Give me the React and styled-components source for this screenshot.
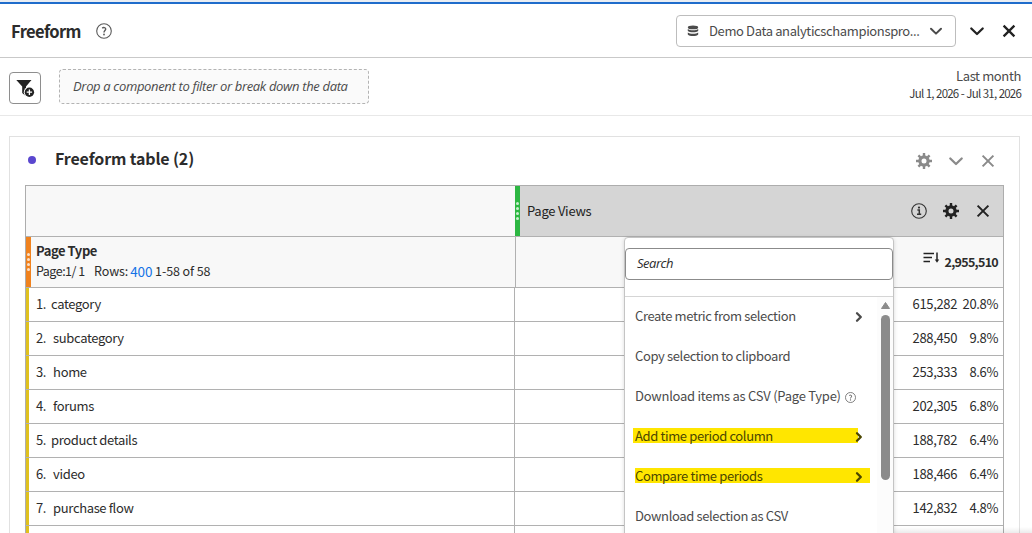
import React from "react";
import styled, { createGlobalStyle } from "styled-components";

const GlobalStyle = createGlobalStyle`
  * {
    box-sizing: border-box;
  }

  body {
    margin: 0;
    overflow: hidden;
    background: #fff;
    color: #2c2c2c;
    font-family: "Noto Sans CJK SC", "Open Sans", sans-serif;
    font-size: 13px;
    line-height: 20px;
    letter-spacing: -0.36px;
  }
`;

const rows = [
  { name: "category", views: "615,282", percent: "20.8%", tight: true },
  { name: "subcategory", views: "288,450", percent: "9.8%" },
  { name: "home", views: "253,333", percent: "8.6%" },
  { name: "forums", views: "202,305", percent: "6.8%" },
  { name: "product details", views: "188,782", percent: "6.4%", tight: true },
  { name: "video", views: "188,466", percent: "6.4%" },
  { name: "purchase flow", views: "142,832", percent: "4.8%" },
  { name: "", views: "", percent: "" },
];

const menuItems = [
  { label: "Create metric from selection", arrow: true },
  { label: "Copy selection to clipboard" },
  { label: "Download items as CSV (Page Type)", help: true },
  { label: "Add time period column", arrow: true, mark: [8, 225] },
  { label: "Compare time periods", arrow: true, mark: [10, 235] },
  { label: "Download selection as CSV" },
];

const Page = styled.div`
  position: relative;
  height: 533px;
  overflow: hidden;
  display: flex;
  flex-direction: column;
`;

const TopStrip = styled.div`
  flex: none;
  height: 4px;
  background: #e9edf3;
  border-bottom: 2px solid #1f6ccb;
`;

const Header = styled.header`
  flex: none;
  height: 54px;
  display: flex;
  align-items: center;
  padding: 0 15px 0 11px;
  border-bottom: 1px solid #c9c9c9;
`;

const Title = styled.h1`
  margin: 0 15px 0 0;
  width: 70px;
  white-space: nowrap;
  font-size: 16.5px;
  font-weight: 700;
  letter-spacing: -0.6px;
`;

const Picker = styled.button`
  margin-left: auto;
  width: 280px;
  height: 32px;
  display: flex;
  align-items: center;
  padding: 0 12px 0 10px;
  border: 1px solid #bdbdbd;
  border-radius: 4px;
  background: #fff;
  color: #4b4b4b;
  font: inherit;
`;

const PickerLabel = styled.span`
  flex: 1;
  margin-left: 10px;
  text-align: left;
  white-space: nowrap;
  letter-spacing: -0.37px;
`;

const HeaderActions = styled.div`
  display: flex;
  gap: 16px;
  margin-left: 13px;
  color: #222;
`;

const FilterBar = styled.div`
  flex: none;
  height: 58px;
  display: flex;
  align-items: flex-start;
  padding: 9px 11px 0 9px;
  border-bottom: 1px solid #e8e8e8;
`;

const FilterButton = styled.button`
  width: 32px;
  height: 32px;
  margin-top: 5px;
  padding: 0;
  border: 1px solid #8e8e8e;
  border-radius: 4px;
  background: #fff;
  display: flex;
  align-items: center;
  justify-content: center;
`;

const DropZone = styled.div`
  width: 310px;
  height: 35px;
  margin: 2px 0 0 18px;
  padding: 0 13px;
  border: 1px dashed #b3b3b3;
  border-radius: 4px;
  background: #fafafa;
  color: #4b4b4b;
  font: italic 13px/33px "Open Sans", sans-serif;
  letter-spacing: -0.34px;
  white-space: nowrap;
`;

const DateRange = styled.div`
  margin-left: auto;
  text-align: right;
  color: #4b4b4b;
  line-height: 18px;
`;

const Dates = styled.div`
  font-size: 11.5px;
  line-height: 17px;
  letter-spacing: -0.8px;
  word-spacing: 0.6px;
  color: #3a3a3a;
`;

const Panel = styled.section`
  flex: none;
  width: 1011px;
  height: 420px;
  margin: 20px 0 0 9px;
  padding: 0 15px;
  border: 1px solid #e1e1e1;
`;

const PanelHead = styled.div`
  height: 48px;
  display: flex;
  align-items: center;
`;

const Dot = styled.span`
  width: 8px;
  height: 8px;
  margin: -2px 19px 0 3px;
  border-radius: 50%;
  background: #5a47cf;
`;

const PanelTitle = styled.h2`
  margin: -7px 0 0;
  font-size: 16px;
  font-weight: 700;
  white-space: nowrap;
  letter-spacing: -0.15px;
`;

const Actions = styled.div`
  display: flex;
  align-items: center;
  gap: 16px;
  margin-left: auto;
  color: ${(props) => props.$color};
  padding-right: ${(props) => props.$end}px;
`;

const Table = styled.div`
  width: 979px;
  border: 1px solid #adadad;
`;

const Row = styled.div`
  display: flex;
  height: ${(props) => props.$height}px;
  border-bottom: 1px solid #b1b1b1;
  background: ${(props) => props.$bg || "#fff"};
`;

const HeadSpacer = styled.div`
  width: 489px;
`;

const MetricHead = styled.div`
  flex: 1;
  display: flex;
  align-items: center;
  background: #d5d5d5;
  color: #222;
`;

const Grip = styled.div`
  width: 5px;
  height: 50px;
  flex: none;
  display: flex;
  flex-direction: column;
  align-items: center;
  justify-content: center;
  gap: 2px;
  background: ${(props) => props.$color};
`;

const GripDot = styled.i`
  width: 3px;
  height: 3px;
  border-radius: 50%;
  background: rgba(255, 255, 255, 0.75);
`;

const MetricName = styled.span`
  margin-left: 7px;
  letter-spacing: -0.26px;
`;

const DimensionCell = styled.div`
  width: 490px;
  display: flex;
  border-right: 1px solid #b1b1b1;
`;

const DimensionText = styled.div`
  padding: 4px 0 0 5px;
  color: #2c2c2c;
`;

const DimensionName = styled.div`
  font-weight: 700;
  letter-spacing: -0.45px;
`;

const Paging = styled.div`
  display: flex;
  white-space: pre;
  font-size: 12.5px;
  letter-spacing: -0.1px;
`;

const PageCount = styled.span`
  width: 58px;
  letter-spacing: -0.5px;
`;

const RowCount = styled.span`
  margin-left: 2px;
  color: #1473e6;
  font-size: 13.5px;
`;

const TotalCell = styled.div`
  position: relative;
  flex: 1;
  display: flex;
  justify-content: flex-end;
  padding: 15px 5px 0 0;
`;

const Total = styled.b`
  margin-left: 5px;
  line-height: 20px;
  font-size: 12.5px;
  letter-spacing: -0.7px;
`;

const ItemCell = styled.div`
  width: 489px;
  padding: 6px 0 0 7px;
  border-left: 3px solid #dfc11e;
  border-right: 1px solid #b1b1b1;
`;

const ItemName = styled.span`
  margin-left: ${(props) => (props.$tight ? 5 : 7)}px;
`;

const ValueCell = styled.div`
  flex: 1;
  display: flex;
  justify-content: flex-end;
  padding: 6px 5px 0 0;
`;

const Percent = styled.span`
  width: 41px;
  text-align: right;
`;

/* dropdown that hangs below the metric header */
const Menu = styled.div`
  position: absolute;
  z-index: 2;
  top: 0;
  right: 109px;
  width: 270px;
  height: 310px;
  border: 1px solid #c4c4c4;
  border-radius: 4px;
  background: #fff;
  box-shadow: 0 1px 4px rgba(0, 0, 0, 0.15);
`;

const Search = styled.div`
  height: 32px;
  margin: 10px 0 16px;
  padding: 0 11px;
  border: 1px solid #8b8b8b;
  border-radius: 4px;
  font: italic 13px/29px "Open Sans", sans-serif;
  letter-spacing: -0.5px;
`;

const MenuBody = styled.div`
  display: flex;
  height: 250px;
  border-top: 1px solid #d5d5d5;
`;

const MenuList = styled.div`
  flex: 1;
  margin-top: -1px;
`;

const MenuItem = styled.div`
  height: 40px;
  display: flex;
  align-items: center;
  padding: 0 11px 0 10px;
  color: ${(props) => (props.$mark ? "#4b4600" : "#4b4b4b")};
  white-space: nowrap;
  letter-spacing: ${(props) => (props.$help ? "-0.25px" : "-0.37px")};
  ${(props) =>
    props.$mark &&
    `background: linear-gradient(#ffe600, #ffe600) ${props.$mark[0]}px 12px / ${props.$mark[1]}px 15px no-repeat;`}

  svg {
    position: relative;
    top: 1px;
    margin-left: ${(props) => (props.$help ? "4px" : "auto")};
  }
`;

const ScrollTrack = styled.div`
  width: 16px;
  display: flex;
  flex-direction: column;
  align-items: center;
  padding: 5px 0 0 1px;
  background: #fcfcfc;
`;

const Thumb = styled.div`
  width: 9px;
  height: 165px;
  margin-top: 6px;
  border-radius: 5px;
  background: #8b8b8b;
`;

/* soft shade above the horizontal edge of the workspace */
const BottomShade = styled.div`
  position: absolute;
  right: 0;
  bottom: 0;
  width: 138px;
  height: 6px;
  background: linear-gradient(rgba(0, 0, 0, 0), rgba(0, 0, 0, 0.08));
`;

const Chevron = ({ size = 14, right, width = 2 }) => (
  <svg width={size} height={size} viewBox="0 0 14 14" fill="none" stroke="currentColor" strokeWidth={width} strokeLinecap="round" strokeLinejoin="round">
    <path d={right ? "M5 3.2 8.8 7 5 10.8" : "M2 4.8 7 9.6 12 4.8"} />
  </svg>
);

const Cross = ({ width = 2 }) => (
  <svg width="16" height="16" viewBox="0 0 16 16" fill="none" stroke="currentColor" strokeWidth={width}>
    <path d="M2.6 2.6 13.4 13.4M13.4 2.6 2.6 13.4" />
  </svg>
);

const Gear = () => (
  <svg width="16" height="16" viewBox="0 0 16 16" fill="none" stroke="currentColor">
    <circle cx="8" cy="8" r="4.1" strokeWidth="3.2" />
    <path d="M8 0v3M8 13v3M0 8h3M13 8h3M2.4 2.4l2 2M11.6 11.6l2 2M13.6 2.4l-2 2M4.4 11.6l-2 2" strokeWidth="2.4" />
  </svg>
);

const Help = ({ size = 16 }) => (
  <svg width={size} height={size} viewBox="0 0 16 16" fill="none" stroke="#5a5a5a">
    <circle cx="8" cy="8" r="7.3" strokeWidth="1.1" />
    <path d="M6.2 5.1C7.4 4.2 9.7 4.4 9.7 6.1 9.7 7.5 8 7.6 8 9.4" strokeWidth="1.4" />
    <circle cx="8" cy="11.5" r="0.9" fill="#5a5a5a" stroke="none" />
  </svg>
);

const Info = () => (
  <svg width="16" height="16" viewBox="0 0 16 16" fill="none" stroke="#333">
    <circle cx="8" cy="8" r="7.3" strokeWidth="1.1" />
    <path d="M6.4 7H8.3V11.3M6 11.3H10.2" strokeWidth="1.5" />
    <circle cx="8" cy="4.6" r="1.1" fill="#333" stroke="none" />
  </svg>
);

const Database = () => (
  <svg width="12" height="12" viewBox="0 0 12 12" fill="#4b4b4b">
    <ellipse cx="6" cy="2.4" rx="5.2" ry="1.9" />
    <path d="M0.8 3.9C2.5 5.7 9.5 5.7 11.2 3.9V6C9.5 7.8 2.5 7.8 0.8 6ZM0.8 7.4C2.5 9.2 9.5 9.2 11.2 7.4V9.5C9.5 11.6 2.5 11.6 0.8 9.5Z" />
  </svg>
);

const FilterAdd = () => (
  <svg width="20" height="20" viewBox="0 0 20 20">
    <path d="M1.3 2H16.5L11 8.6V18.3L7.2 15V8.6Z" fill="#222" />
    <circle cx="14.4" cy="14.2" r="5.6" fill="#fff" />
    <circle cx="14.4" cy="14.2" r="4.7" fill="#222" />
    <path d="M14.4 11.5V16.9M11.7 14.2H17.1" stroke="#fff" strokeWidth="1.3" />
  </svg>
);

const SortDown = () => (
  <svg width="17" height="12" viewBox="0 0 17 12" fill="none" stroke="#222" strokeWidth="1.5">
    <path d="M0.5 1.5H11M0.5 5.5H9M0.5 9.5H7M14 0.5V9" />
    <path d="M11.8 7.6H16.2L14 10.8Z" fill="#222" stroke="none" />
  </svg>
);

const GripDots = ({ color }) => (
  <Grip $color={color}>
    {[0, 1, 2, 3].map((dot) => (
      <GripDot key={dot} />
    ))}
  </Grip>
);

const MetricMenu = () => (
  <Menu>
    <Search>Search</Search>
    <MenuBody>
      <MenuList>
        {menuItems.map((item) => (
          <MenuItem key={item.label} $mark={item.mark} $help={item.help}>
            {item.label}
            {item.help && <Help size={11} />}
            {item.arrow && <Chevron right width={2.3} />}
          </MenuItem>
        ))}
      </MenuList>
      <ScrollTrack>
        <svg width="9" height="7" viewBox="0 0 9 7">
          <path d="M4.5 0.5 8.5 6.5H0.5Z" fill="#8b8b8b" stroke="#8b8b8b" strokeLinejoin="round" />
        </svg>
        <Thumb />
      </ScrollTrack>
    </MenuBody>
  </Menu>
);

const FreeformTable = () => (
  <Table>
    <Row $height={51} $bg="#f8f8f8">
      <HeadSpacer />
      <MetricHead>
        <GripDots color="#2db742" />
        <MetricName>Page Views</MetricName>
        <Actions $color="#222" $end={12}>
          <Info />
          <Gear />
          <Cross />
        </Actions>
      </MetricHead>
    </Row>
    <Row $height={51} $bg="#f8f8f8">
      <DimensionCell>
        <GripDots color="#f0821e" />
        <DimensionText>
          <DimensionName>Page Type</DimensionName>
          <Paging>
            <PageCount>Page:1/ 1</PageCount>
            Rows:
            <RowCount>400</RowCount>
            {" 1-58 of 58"}
          </Paging>
        </DimensionText>
      </DimensionCell>
      <TotalCell>
        <SortDown />
        <Total>2,955,510</Total>
        <MetricMenu />
      </TotalCell>
    </Row>
    {rows.map((row, index) => (
      <Row key={index} $height={34}>
        <ItemCell>
          {row.name && `${index + 1}.`}
          <ItemName $tight={row.tight}>{row.name}</ItemName>
        </ItemCell>
        <ValueCell>
          {row.views}
          <Percent>{row.percent}</Percent>
        </ValueCell>
      </Row>
    ))}
  </Table>
);

const App = () => {
  return (
    <Page>
      <GlobalStyle />
      <TopStrip />
      <Header>
        <Title>Freeform</Title>
        <Help />
        <Picker>
          <Database />
          <PickerLabel>Demo Data analyticschampionspro...</PickerLabel>
          <Chevron />
        </Picker>
        <HeaderActions>
          <Chevron size={16} />
          <Cross width={2.3} />
        </HeaderActions>
      </Header>
      <FilterBar>
        <FilterButton>
          <FilterAdd />
        </FilterButton>
        <DropZone>Drop a component to filter or break down the data</DropZone>
        <DateRange>
          Last month
          <Dates>Jul 1, 2026 - Jul 31, 2026</Dates>
        </DateRange>
      </FilterBar>
      <Panel>
        <PanelHead>
          <Dot />
          <PanelTitle>Freeform table (2)</PanelTitle>
          <Actions $color="#8a8a8a" $end={8}>
            <Gear />
            <Chevron size={16} />
            <Cross />
          </Actions>
        </PanelHead>
        <FreeformTable />
      </Panel>
      <BottomShade />
    </Page>
  );
};

export default App;
